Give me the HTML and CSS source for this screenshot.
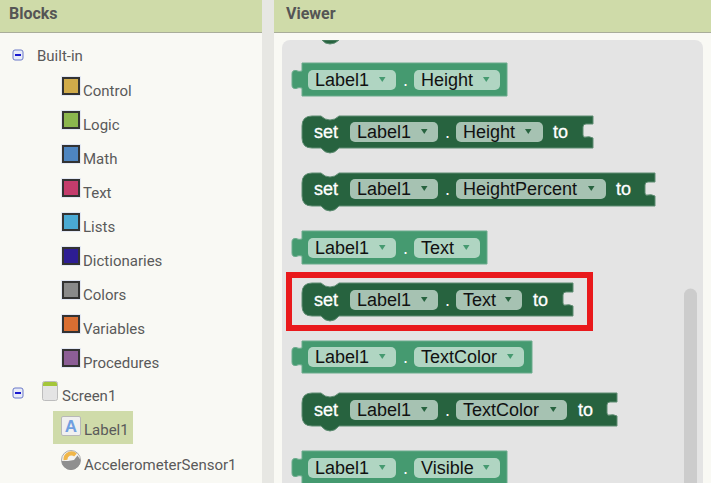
FILE: index.html
```html
<!DOCTYPE html>
<html lang="en">
<head>
<meta charset="utf-8">
<title>Blocks</title>
<link rel="stylesheet" href="styles.css">
</head>
<body>
<div class="app">
  <section class="panel-left">
    <h2 class="head">Blocks</h2>
    <div class="tree">
      <div class="row row-root">
        <svg class="toggle" width="13" height="13" viewBox="0 0 13 13"><rect class="toggle-box" x="1" y="1" width="10" height="10" rx="2"/><rect class="toggle-minus" x="3" y="5" width="6" height="2"/></svg>
        <span class="root-label">Built-in</span>
      </div>
      <div class="row row-item"><span class="swatch sw-control"></span><span class="item-label">Control</span></div>
      <div class="row row-item"><span class="swatch sw-logic"></span><span class="item-label">Logic</span></div>
      <div class="row row-item"><span class="swatch sw-math"></span><span class="item-label">Math</span></div>
      <div class="row row-item"><span class="swatch sw-text"></span><span class="item-label">Text</span></div>
      <div class="row row-item"><span class="swatch sw-lists"></span><span class="item-label">Lists</span></div>
      <div class="row row-item"><span class="swatch sw-dict"></span><span class="item-label">Dictionaries</span></div>
      <div class="row row-item"><span class="swatch sw-colors"></span><span class="item-label">Colors</span></div>
      <div class="row row-item"><span class="swatch sw-vars"></span><span class="item-label">Variables</span></div>
      <div class="row row-item"><span class="swatch sw-procs"></span><span class="item-label">Procedures</span></div>
      <div class="row row-screen">
        <svg class="toggle toggle-screen" width="13" height="13" viewBox="0 0 13 13"><rect class="toggle-box" x="1" y="1" width="10" height="10" rx="2"/><rect class="toggle-minus" x="3" y="5" width="6" height="2"/></svg>
        <svg class="screen-icon" width="16" height="20" viewBox="0 0 16 20"><rect x="0.5" y="0.5" width="15" height="19" rx="2" fill="#e4e4e4" stroke="#bdbdbd"/><path d="M1 5V2.500Q1 1 2.500 1H13.500Q15 1 15 2.500V5Z" fill="#a4c639"/></svg>
        <span class="screen-label">Screen1</span>
      </div>
      <div class="row-comp">
        <div class="comp-selected">
          <svg class="comp-icon" width="20" height="20" viewBox="0 0 20 20"><rect x="0.500" y="0.500" width="19" height="19" rx="1.500" fill="#f0f0f0" stroke="#b8b8b8"/><text class="label-a" x="10" y="15.500" text-anchor="middle">A</text></svg>
          <span class="item-label">Label1</span>
        </div>
      </div>
      <div class="row-comp">
        <div class="comp-plain">
          <svg class="comp-icon" width="20" height="20" viewBox="0 0 20 20"><circle cx="10" cy="10" r="9.500" fill="#f2f2f2" stroke="#aaaaaa"/><path d="M4.500 10A6 6 0 0 1 14.500 5" fill="none" stroke="#f0b64a" stroke-width="4"/><path d="M0.500 11H7L13 10L16.500 5.500L19.500 10A9.500 9.500 0 0 1 0.500 11Z" fill="#8f8f8f"/></svg>
          <span class="item-label">AccelerometerSensor1</span>
        </div>
      </div>
    </div>
  </section>
  <div class="splitter"></div>
  <section class="panel-right">
    <h2 class="head">Viewer</h2>
    <div class="viewer">
      <svg class="canvas" width="421" height="443" viewBox="282 40 421 443">
        <path class="b-set" d="M322 40 H339 Q335 44 330 44 Q325 44 322 40 Z"/>

        <!-- value: Label1.Height -->
        <g>
          <path class="b-val" d="M302 63 H507 V96 H302 V88 Q299 87 296 88.500 Q292 89 292 85 V74 Q292 70 296 70.500 Q299 72 302 71 Z"/>
          <rect class="f-val" x="308" y="70" width="88" height="20" rx="5"/>
          <text class="t-field" x="315" y="86">Label1</text>
          <path class="arrow-val" d="M379 77 h6.500 l-3.250 5 Z"/>
          <text class="t-dot" x="403" y="86">.</text>
          <rect class="f-val" x="414" y="70" width="86" height="20" rx="5"/>
          <text class="t-field" x="421" y="86">Height</text>
          <path class="arrow-val" d="M483 77 h6.500 l-3.250 5 Z"/>
        </g>

        <!-- set Height -->
        <g>
          <path class="b-set" d="M312 116 H321 Q325 120 330 120 Q335 120 339 116 H593 V124 H586 Q583 124 583 127 V135 Q583 138 586 137 Q589 136 593 138 V148 H339 Q335 153 330 153 Q325 153 321 148 H312 Q302 148 302 138 V126 Q302 116 312 116 Z"/>
          <text class="t-kw" x="314" y="138">set</text>
          <rect class="f-set" x="350" y="122" width="88" height="20" rx="5"/>
          <text class="t-field" x="357" y="138">Label1</text>
          <path class="arrow-set" d="M421 129 h6.500 l-3.250 5 Z"/>
          <text class="t-dot" x="445" y="138">.</text>
          <rect class="f-set" x="456" y="122" width="87" height="20" rx="5"/>
          <text class="t-field" x="463" y="138">Height</text>
          <path class="arrow-set" d="M525 129 h6.500 l-3.250 5 Z"/>
          <text class="t-kw" x="553" y="138">to</text>
        </g>

        <!-- set HeightPercent -->
        <g>
          <path class="b-set" d="M312 173 H321 Q325 177 330 177 Q335 177 339 173 H655 V182 H648 Q645 182 645 185 V193 Q645 196 648 195 Q651 194 655 196 V206 H339 Q335 211 330 211 Q325 211 321 206 H312 Q302 206 302 196 V183 Q302 173 312 173 Z"/>
          <text class="t-kw" x="314" y="195">set</text>
          <rect class="f-set" x="350" y="179" width="88" height="20" rx="5"/>
          <text class="t-field" x="357" y="195">Label1</text>
          <path class="arrow-set" d="M421 186 h6.500 l-3.250 5 Z"/>
          <text class="t-dot" x="445" y="195">.</text>
          <rect class="f-set" x="456" y="179" width="150" height="20" rx="5"/>
          <text class="t-field" x="463" y="195">HeightPercent</text>
          <path class="arrow-set" d="M588 186 h6.500 l-3.250 5 Z"/>
          <text class="t-kw" x="616" y="195">to</text>
        </g>

        <!-- value: Label1.Text -->
        <g>
          <path class="b-val" d="M302 231 H487 V264 H302 V256 Q299 255 296 256.500 Q292 257 292 253 V242 Q292 238 296 238.500 Q299 240 302 239 Z"/>
          <rect class="f-val" x="308" y="238" width="88" height="20" rx="5"/>
          <text class="t-field" x="315" y="254">Label1</text>
          <path class="arrow-val" d="M379 245 h6.500 l-3.250 5 Z"/>
          <text class="t-dot" x="403" y="254">.</text>
          <rect class="f-val" x="414" y="238" width="66" height="20" rx="5"/>
          <text class="t-field" x="421" y="254">Text</text>
          <path class="arrow-val" d="M463 245 h6.500 l-3.250 5 Z"/>
        </g>

        <!-- set Text -->
        <g>
          <path class="b-set" d="M312 283 H321 Q325 287 330 287 Q335 287 339 283 H573 V292 H566 Q563 292 563 295 V303 Q563 306 566 305 Q569 304 573 306 V316 H339 Q335 321 330 321 Q325 321 321 316 H312 Q302 316 302 306 V293 Q302 283 312 283 Z"/>
          <text class="t-kw" x="314" y="306">set</text>
          <rect class="f-set" x="350" y="290" width="88" height="20" rx="5"/>
          <text class="t-field" x="357" y="306">Label1</text>
          <path class="arrow-set" d="M421 297 h6.500 l-3.250 5 Z"/>
          <text class="t-dot" x="445" y="306">.</text>
          <rect class="f-set" x="456" y="290" width="66" height="20" rx="5"/>
          <text class="t-field" x="463" y="306">Text</text>
          <path class="arrow-set" d="M505 297 h6.500 l-3.250 5 Z"/>
          <text class="t-kw" x="533" y="306">to</text>
        </g>
        <rect class="highlight" x="289" y="275" width="301" height="53"/>

        <!-- value: Label1.TextColor -->
        <g>
          <path class="b-val" d="M302 341 H532 V373 H302 V365 Q299 364 296 365.500 Q292 366 292 362 V351 Q292 347 296 347.500 Q299 349 302 348 Z"/>
          <rect class="f-val" x="308" y="347" width="88" height="20" rx="5"/>
          <text class="t-field" x="315" y="363">Label1</text>
          <path class="arrow-val" d="M379 354 h6.500 l-3.250 5 Z"/>
          <text class="t-dot" x="403" y="363">.</text>
          <rect class="f-val" x="414" y="347" width="110" height="20" rx="5"/>
          <text class="t-field" x="421" y="363">TextColor</text>
          <path class="arrow-val" d="M507 354 h6.500 l-3.250 5 Z"/>
        </g>

        <!-- set TextColor -->
        <g>
          <path class="b-set" d="M312 393 H321 Q325 397 330 397 Q335 397 339 393 H617 V402 H610 Q607 402 607 405 V413 Q607 416 610 415 Q613 414 617 416 V426 H339 Q335 431 330 431 Q325 431 321 426 H312 Q302 426 302 416 V403 Q302 393 312 393 Z"/>
          <text class="t-kw" x="314" y="416">set</text>
          <rect class="f-set" x="350" y="400" width="88" height="20" rx="5"/>
          <text class="t-field" x="357" y="416">Label1</text>
          <path class="arrow-set" d="M421 407 h6.500 l-3.250 5 Z"/>
          <text class="t-dot" x="445" y="416">.</text>
          <rect class="f-set" x="456" y="400" width="111" height="20" rx="5"/>
          <text class="t-field" x="463" y="416">TextColor</text>
          <path class="arrow-set" d="M550 407 h6.500 l-3.250 5 Z"/>
          <text class="t-kw" x="578" y="416">to</text>
        </g>

        <!-- value: Label1.Visible -->
        <g>
          <path class="b-val" d="M302 451 H507 V484 H302 V476 Q299 475 296 476.500 Q292 477 292 473 V462 Q292 458 296 458.500 Q299 460 302 459 Z"/>
          <rect class="f-val" x="308" y="458" width="88" height="20" rx="5"/>
          <text class="t-field" x="315" y="474">Label1</text>
          <path class="arrow-val" d="M379 465 h6.500 l-3.250 5 Z"/>
          <text class="t-dot" x="403" y="474">.</text>
          <rect class="f-val" x="414" y="458" width="86" height="20" rx="5"/>
          <text class="t-field" x="421" y="474">Visible</text>
          <path class="arrow-val" d="M483 465 h6.500 l-3.250 5 Z"/>
        </g>

        <path class="scrollbar" d="M684 483 V295 A6.500 6.500 0 0 1 697 295 V483 Z"/>
      </svg>
    </div>
  </section>
</div>
</body>
</html>
```

FILE: styles.css
```css
* { box-sizing: border-box; }
html, body { margin: 0; height: 100%; overflow: hidden; }
body { background: #f9f9f4; font-family: Roboto, "Liberation Sans", sans-serif; color: #5a5a5a; }
.app { display: flex; width: 711px; height: 483px; }
.panel-left { width: 262px; flex: none; }
.splitter { width: 12px; flex: none; background: #e7e7e3; }
.panel-right { flex: 1; min-width: 0; display: flex; flex-direction: column; }
.head {
  margin: 0; height: 33px; padding: 4px 9px 0 9px;
  background: #cfdba9; border-bottom: 1px solid #a9ad9a;
  font-size: 16px; line-height: 19px; font-weight: 700; color: #555;
}
.panel-right .head { padding-left: 12px; }
.tree { padding-top: 6px; font-size: 15px; }
.row { display: flex; align-items: center; }
.row-root { height: 32px; padding-left: 12px; }
.root-label { margin-left: 12px; margin-top: 2px; }
.row-item { height: 34px; padding-left: 62px; }
.swatch { width: 18px; height: 18px; border: 2px solid #333; outline: 1px solid #e3e8f4; margin-top: -4px; flex: none; }
.item-label { margin-left: 3px; margin-top: 6px; }
.sw-control { background: #d0ab4a; }
.sw-logic { background: #8bb64e; }
.sw-math { background: #4e85c0; }
.sw-text { background: #c43c6c; }
.sw-lists { background: #4aaad4; }
.sw-dict { background: #2d1d94; }
.sw-colors { background: #8a8a8a; }
.sw-vars { background: #d96e32; }
.sw-procs { background: #8c5e96; }
.row-screen { height: 34px; padding-left: 12px; }
.toggle-screen { margin-top: -2px; }
.screen-icon { margin-left: 17px; margin-top: -6px; flex: none; }
.screen-label { margin-left: 4px; margin-top: 4px; }
.row-comp { height: 34px; padding-left: 53px; }
.comp-selected, .comp-plain { display: flex; align-items: center; height: 33px; padding-left: 8px; }
.comp-selected { width: 80px; background: #cfdba9; }
.comp-plain { margin-top: 1px; }
.comp-icon { margin-top: -4px; flex: none; }
.comp-plain .comp-icon { margin-top: -6px; }
.comp-selected .item-label, .comp-plain .item-label { margin-left: 3px; margin-top: 4px; white-space: nowrap; }
.label-a { font: 700 17px "Liberation Sans", sans-serif; fill: #6f9fe0; }
.toggle { flex: none; }
.toggle-box { fill: #e8ecf8; stroke: #6a78c8; stroke-width: 1; }
.toggle-minus { fill: #1a1ad0; }
.viewer { flex: 1; min-height: 0; padding: 7px 8px 0 8px; }
.canvas { display: block; background: #e4e4e4; border-radius: 8px 8px 0 0; }
.b-val { fill: #459a70; stroke: #6aab8c; stroke-width: 1; }
.b-set { fill: #27633f; stroke: #5e8c72; stroke-width: 1; }
.f-val { fill: #b0d5c2; }
.f-set { fill: #a6c2b2; }
.arrow-val { fill: #459a70; }
.arrow-set { fill: #27633f; }
.t-field, .t-kw, .t-dot { font-family: "Liberation Sans", Arial, sans-serif; font-size: 18px; }
.t-field { fill: #111; }
.t-kw { fill: #fff; stroke: #fff; stroke-width: 0.3; }
.t-dot { fill: #fff; }
.highlight { fill: none; stroke: #e9191c; stroke-width: 6; }
.scrollbar { fill: #cccccc; }
```
